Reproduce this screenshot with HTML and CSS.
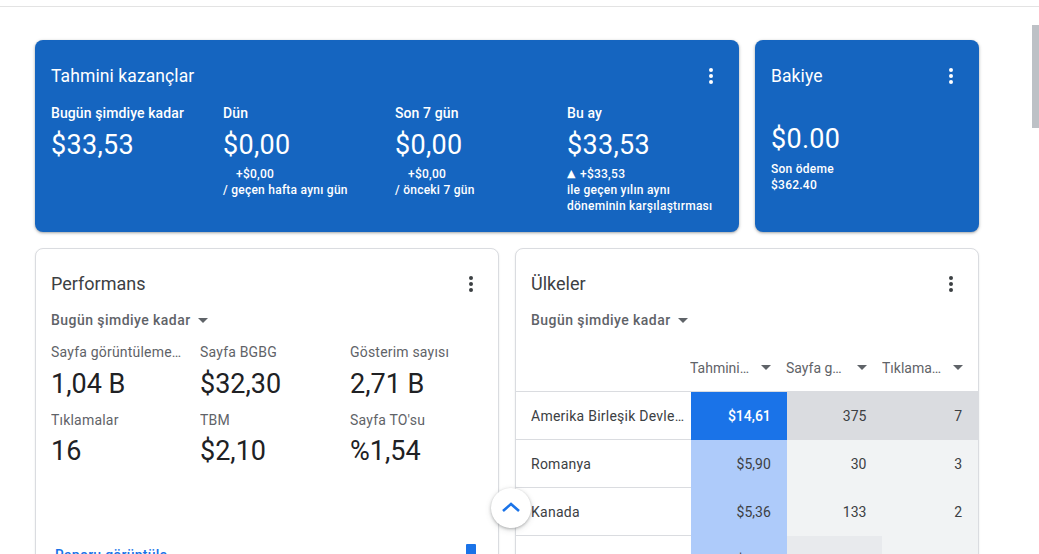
FILE: index.html
```html
<!DOCTYPE html>
<html lang="tr">
<head>
<meta charset="utf-8">
<title>AdSense</title>
<link rel="stylesheet" href="styles.css">
</head>
<body>
<div class="topbar"></div>
<main class="content">
  <div class="row row-top">
    <section class="card blue earn">
      <div class="card-head">
        <h2 class="title">Tahmini kazançlar</h2>
        <svg class="kebab" viewBox="0 0 24 24" width="24" height="24"><circle cx="12" cy="6" r="2"/><circle cx="12" cy="12" r="2"/><circle cx="12" cy="18" r="2"/></svg>
      </div>
      <div class="earn-grid">
        <div class="earn-col">
          <div class="earn-label">Bugün şimdiye kadar</div>
          <div class="earn-value">$33,53</div>
        </div>
        <div class="earn-col">
          <div class="earn-label">Dün</div>
          <div class="earn-value">$0,00</div>
          <div class="earn-sub"><span class="tri-space"></span>+$0,00</div>
          <div class="earn-sub">/ geçen hafta aynı gün</div>
        </div>
        <div class="earn-col">
          <div class="earn-label">Son 7 gün</div>
          <div class="earn-value">$0,00</div>
          <div class="earn-sub"><span class="tri-space"></span>+$0,00</div>
          <div class="earn-sub">/ önceki 7 gün</div>
        </div>
        <div class="earn-col">
          <div class="earn-label">Bu ay</div>
          <div class="earn-value">$33,53</div>
          <div class="earn-sub"><span class="tri">▲</span>+$33,53</div>
          <div class="earn-sub">ile geçen yılın aynı</div>
          <div class="earn-sub">döneminin karşılaştırması</div>
        </div>
      </div>
    </section>
    <section class="card blue balance">
      <div class="card-head">
        <h2 class="title">Bakiye</h2>
        <svg class="kebab" viewBox="0 0 24 24" width="24" height="24"><circle cx="12" cy="6" r="2"/><circle cx="12" cy="12" r="2"/><circle cx="12" cy="18" r="2"/></svg>
      </div>
      <div class="bal-value">$0.00</div>
      <div class="earn-sub">Son ödeme</div>
      <div class="earn-sub">$362.40</div>
    </section>
  </div>

  <div class="row row-bottom">
    <section class="card white perf">
      <div class="card-head">
        <h2 class="title dark">Performans</h2>
        <svg class="kebab grey" viewBox="0 0 24 24" width="24" height="24"><circle cx="12" cy="6" r="2"/><circle cx="12" cy="12" r="2"/><circle cx="12" cy="18" r="2"/></svg>
      </div>
      <div class="dropdown">Bugün şimdiye kadar <svg class="caret" viewBox="0 0 10 5" width="10" height="5"><path d="M0 0h10L5 5z"/></svg></div>
      <div class="metrics">
        <div class="m-label">Sayfa görüntülemeleri</div>
        <div class="m-label">Sayfa BGBG</div>
        <div class="m-label">Gösterim sayısı</div>
        <div class="m-value">1,04 B</div>
        <div class="m-value">$32,30</div>
        <div class="m-value">2,71 B</div>
        <div class="m-label second">Tıklamalar</div>
        <div class="m-label second">TBM</div>
        <div class="m-label second">Sayfa TO'su</div>
        <div class="m-value second-v">16</div>
        <div class="m-value second-v">$2,10</div>
        <div class="m-value second-v">%1,54</div>
      </div>
      <div class="card-foot">
        <span class="link">Raporu görüntüle</span>
        <span class="foot-icon"></span>
      </div>
    </section>

    <section class="card white countries">
      <div class="card-head pad">
        <h2 class="title dark">Ülkeler</h2>
        <svg class="kebab grey" viewBox="0 0 24 24" width="24" height="24"><circle cx="12" cy="6" r="2"/><circle cx="12" cy="12" r="2"/><circle cx="12" cy="18" r="2"/></svg>
      </div>
      <div class="dropdown pad">Bugün şimdiye kadar <svg class="caret" viewBox="0 0 10 5" width="10" height="5"><path d="M0 0h10L5 5z"/></svg></div>
      <div class="table">
        <div class="tr thead">
          <div class="td name"></div>
          <div class="td th"><span class="th-text">Tahmini kazançlar</span><svg class="caret" viewBox="0 0 10 5" width="10" height="5"><path d="M0 0h10L5 5z"/></svg></div>
          <div class="td th"><span class="th-text">Sayfa görüntülemeleri</span><svg class="caret" viewBox="0 0 10 5" width="10" height="5"><path d="M0 0h10L5 5z"/></svg></div>
          <div class="td th"><span class="th-text">Tıklamalar</span><svg class="caret" viewBox="0 0 10 5" width="10" height="5"><path d="M0 0h10L5 5z"/></svg></div>
        </div>
        <div class="tr">
          <div class="td name"><span class="ellipsis">Amerika Birleşik Devletleri</span></div>
          <div class="td num b-strong">$14,61</div>
          <div class="td num g-strong">375</div>
          <div class="td num g-strong">7</div>
        </div>
        <div class="tr">
          <div class="td name">Romanya</div>
          <div class="td num b-light">$5,90</div>
          <div class="td num g-light">30</div>
          <div class="td num g-light">3</div>
        </div>
        <div class="tr">
          <div class="td name">Kanada</div>
          <div class="td num b-light">$5,36</div>
          <div class="td num g-light">133</div>
          <div class="td num g-light">2</div>
        </div>
        <div class="tr">
          <div class="td name">Almanya</div>
          <div class="td num b-light">$1,42</div>
          <div class="td num g-mid">61</div>
          <div class="td num g-light">1</div>
        </div>
      </div>
    </section>
  </div>
</main>

<button class="scroll-up" aria-label="Yukarı">
  <svg viewBox="0 0 24 24" width="24" height="24"><path d="M4 16l8-7 8 7" fill="none" stroke="#1a73e8" stroke-width="2.6"/></svg>
</button>
<div class="scroll-thumb"></div>
</body>
</html>
```

FILE: styles.css
```css
* { box-sizing: border-box; }
html, body { margin: 0; height: 100%; overflow: hidden; }
body {
  font-family: Roboto, "Liberation Sans", Arial, sans-serif;
  background: #fff;
  color: #3c4043;
  position: relative;
}
.topbar {
  height: 7px;
  border-bottom: 1px solid #e3e3e3;
}
.content {
  padding: 33px 0 0 35px;
  display: flex;
  flex-direction: column;
  gap: 16px;
}
.row { display: flex; gap: 16px; }

.card { border-radius: 8px; }
.blue {
  background: #1565c0;
  color: #fff;
  height: 192px;
  padding: 24px 16px 0;
  box-shadow: 0 1px 2px rgba(60,64,67,.3), 0 1px 3px 1px rgba(60,64,67,.15);
}
.earn { width: 704px; }
.balance { width: 224px; }

.card-head {
  display: flex;
  align-items: center;
  justify-content: space-between;
  height: 24px;
}
.title {
  margin: 0;
  font-size: 17.5px;
  font-weight: 400;
  line-height: 24px;
  letter-spacing: .1px;
}
.title.dark { color: #3c4043; font-size: 18px; letter-spacing: 0; }
.kebab { fill: #fff; display: block; }
.kebab.grey { fill: #3c4043; }

.earn-grid {
  display: grid;
  grid-template-columns: repeat(4, 172px);
  margin-top: 15px;
}
.earn-label { font-size: 14px; font-weight: 500; line-height: 20px; letter-spacing: .1px; }
.earn-value { font-size: 27px; line-height: 32px; margin-top: 6px; margin-bottom: 5px; letter-spacing: .3px; }
.earn-sub { font-size: 12px; font-weight: 500; line-height: 16px; letter-spacing: .25px; display: flex; align-items: center; }
.tri {
  font-family: "DejaVu Sans", sans-serif;
  font-size: 11px;
  line-height: 16px;
  width: 13px;
  flex: none;
  letter-spacing: 0;
}
.tri-space { width: 13px; flex: none; }

.bal-value { font-size: 27px; line-height: 32px; margin-top: 35px; margin-bottom: 6px; letter-spacing: .3px; }

.white {
  background: #fff;
  width: 464px;
  height: 330px;
  border: 1px solid #dadce0;
  box-shadow: 0 1px 2px rgba(60,64,67,.12);
}
.perf { padding: 23px 15px 0; }
.countries { padding: 23px 0 0; overflow: hidden; }
.pad { padding: 0 15px; }

.dropdown {
  margin-top: 14px;
  font-size: 14px;
  font-weight: 500;
  letter-spacing: .45px;
  line-height: 20px;
  color: #5f6368;
  display: flex;
  align-items: center;
  gap: 7px;
}
.caret { fill: #5f6368; display: block; flex: none; }

.metrics {
  display: grid;
  grid-template-columns: 133px 134px 1fr;
  column-gap: 16px;
  margin-top: 12px;
}
.m-label {
  font-size: 14px;
  line-height: 20px;
  color: #5f6368;
  white-space: nowrap;
  overflow: hidden;
  text-overflow: ellipsis;
  letter-spacing: .2px;
}
.m-label.second { margin-top: 10px; }
.m-value {
  font-size: 27px;
  line-height: 32px;
  color: #202124;
  margin-top: 6px;
}
.m-value.second-v { margin-top: 5px; }

.card-foot {
  margin-top: 78px;
  display: flex;
  justify-content: space-between;
  align-items: flex-start;
  padding: 0 7px 0 4px;
}
.link { font-size: 14px; font-weight: 500; color: #1a73e8; line-height: 20px; letter-spacing: .25px; }
.foot-icon {
  width: 10px; height: 14px; margin-top: -1px;
  background: #1a73e8;
  border-radius: 1px 1px 0 0;
}

.table { margin-top: 14px; }
.tr { display: flex; height: 48px; }
.thead { border-bottom: 1px solid #dadce0; }
.td { font-size: 14px; line-height: 20px; display: flex; align-items: center; }
.name {
  width: 176px;
  padding-left: 15px;
  padding-right: 6px;
  border-bottom: 1px solid #dadce0;
  color: #3c4043;
  min-width: 0;
  letter-spacing: .25px;
}
.thead .name { border-bottom: 0; }
.ellipsis { white-space: nowrap; overflow: hidden; text-overflow: ellipsis; }
.th {
  width: 96px;
  color: #5f6368;
  padding-right: 15px;
  gap: 9px;
}
.th-text { width: 62px; flex: none; white-space: nowrap; overflow: hidden; text-overflow: ellipsis; }
.num {
  width: 96px;
  justify-content: flex-end;
  padding-right: 16px;
  color: #3c4043;
}
.b-strong { background: #1a73e8; color: #fff; font-weight: 500; }
.b-light { background: #aecbfa; }
.g-strong { background: #dadce0; }
.g-light { background: #f1f3f4; }
.g-mid { background: #e8eaed; }
.tr:last-child .td { align-items: flex-start; padding-top: 14px; }

.scroll-up {
  position: absolute;
  left: 491px;
  top: 488px;
  width: 40px;
  height: 40px;
  border-radius: 50%;
  border: 0;
  background: #fff;
  box-shadow: 0 1px 3px rgba(60,64,67,.35), 0 2px 6px rgba(60,64,67,.15);
  display: flex;
  align-items: center;
  justify-content: center;
  padding: 0;
}
.scroll-up svg { display: block; margin-top: -2px; }
.scroll-thumb {
  position: absolute;
  left: 1032px;
  top: 25px;
  width: 7px;
  height: 103px;
  background: #bdc1c6;
}
```
